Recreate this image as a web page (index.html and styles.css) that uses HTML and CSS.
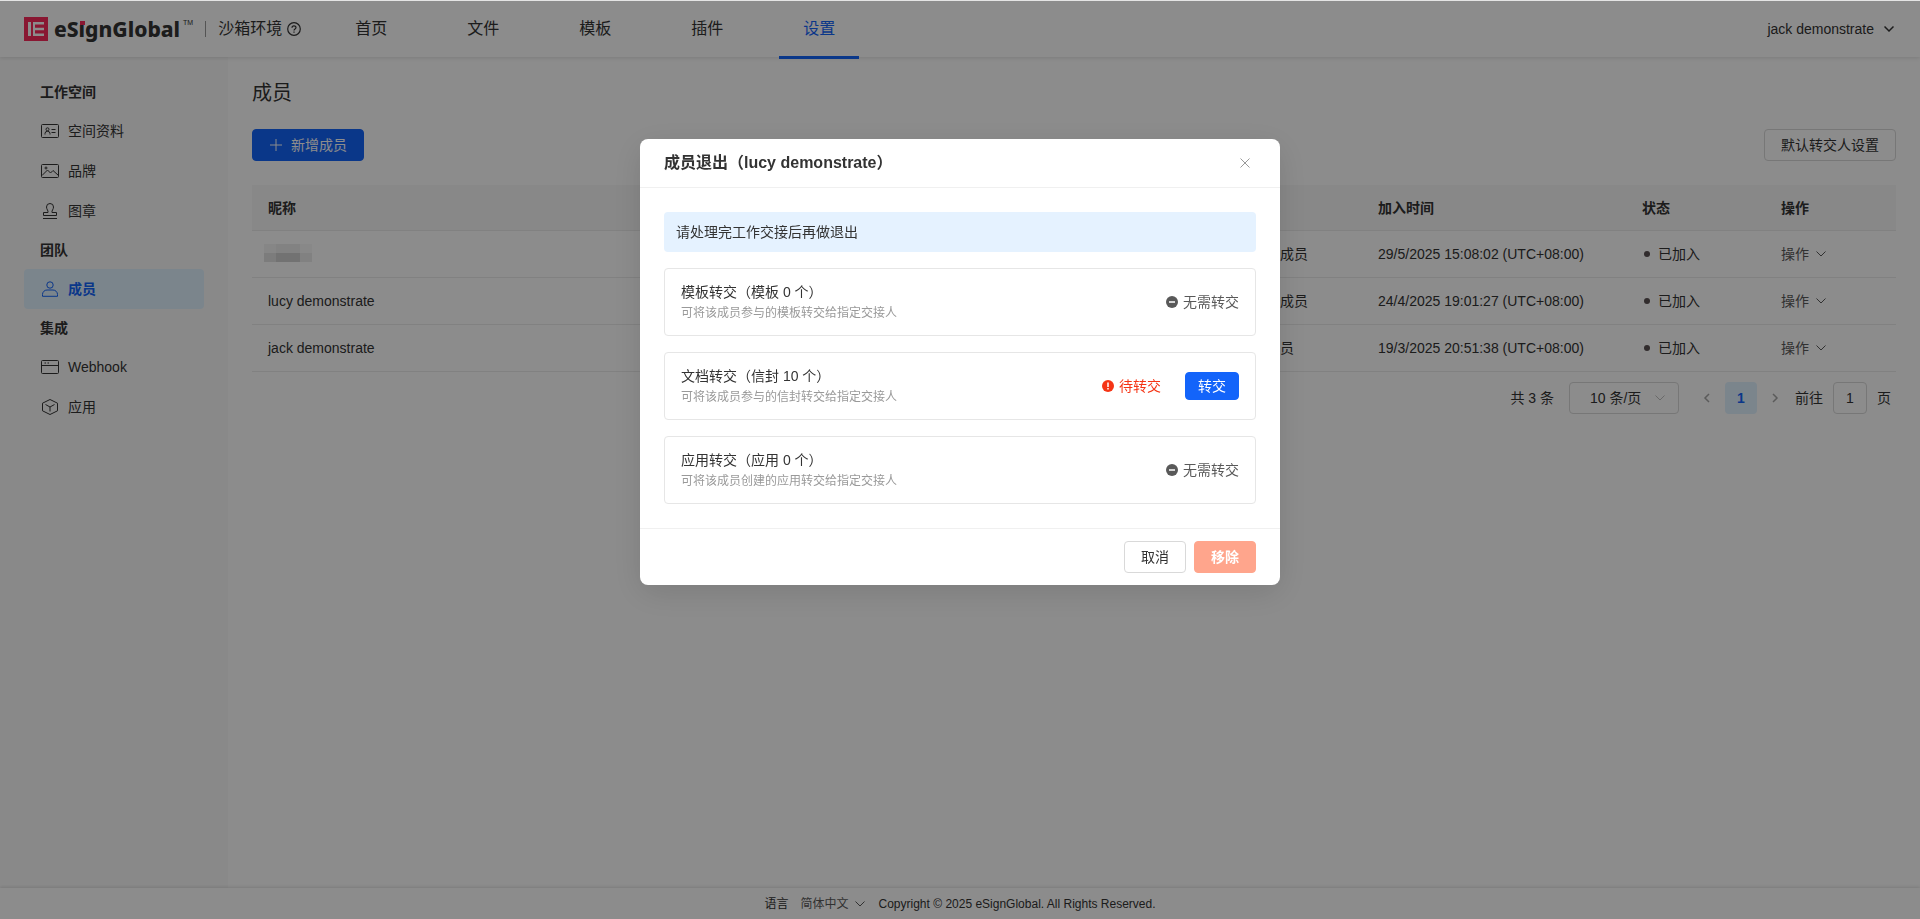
FILE: index.html
```html
<!DOCTYPE html>
<html lang="zh-CN">
<head>
  <meta charset="UTF-8">
  <meta name="viewport" content="width=device-width, initial-scale=1.0">
  <title>成员 - eSignGlobal</title>
  <link rel="stylesheet" href="styles.css">
</head>
<body>
  <header class="header">
    <a href="#" class="logo" aria-label="eSignGlobal">
      <svg class="logo-mark" viewBox="0 0 24 24">
        <rect width="24" height="24" fill="#fa2b5c"/>
        <path d="M4 5h3v14h-3zM9 5h11v2.500h-9v3.250h9v2.500h-9v3.250h9v2.500h-11z" fill="#fff"/>
      </svg>
      <span class="logo-text">eS<span class="logo-i">ı<i></i></span>gnGlobal</span>
      <span class="logo-tm">TM</span>
    </a>
    <span class="divider"></span>
    <span class="env">沙箱环境</span>
    <svg class="help" viewBox="0 0 14 14">
      <circle cx="7" cy="7" r="6.300"/>
      <path d="M5 5.700C5 3.200 9 3.200 9 5.600 9 7 7 6.900 7 8.500M7 9.500v1.200"/>
    </svg>
    <nav class="nav">
      <a href="#">首页</a>
      <a href="#">文件</a>
      <a href="#">模板</a>
      <a href="#">插件</a>
      <a href="#" class="active">设置</a>
    </nav>
    <button class="user">
      jack demonstrate
      <svg class="arrow" viewBox="0 0 10 10"><path d="M.500 2.500 5 7l4.500-4.500"/></svg>
    </button>
  </header>

  <div class="layout">
    <aside class="sidebar">
      <div class="menu-title">工作空间</div>
      <a href="#" class="menu-item">
        <svg viewBox="0 0 18 18">
          <rect x=".500" y="2.500" width="17" height="13" rx="1"/>
          <circle cx="6.500" cy="7.300" r="1.500"/>
          <path d="M4 12.500V11.500Q4 9.300 6.500 9.300T9 11.500V12.500M10.500 7.500h4M10.500 10.500h4"/>
        </svg>
        空间资料
      </a>
      <a href="#" class="menu-item">
        <svg viewBox="0 0 18 18">
          <rect x=".500" y="2.500" width="17" height="13" rx="1"/>
          <circle cx="5" cy="6" r="1"/>
          <path d="M1 13.500 6.500 8l3 3L12 8.500l5.500 5"/>
        </svg>
        品牌
      </a>
      <a href="#" class="menu-item">
        <svg viewBox="0 0 18 18">
          <path d="M7 10.500C7.500 8.500 5.500 7.500 5.500 5a3.500 3.500 0 0 1 7 0C12.500 7.500 10.500 8.500 11 10.500h4.500v3h-13v-3zM2 16.500h14"/>
        </svg>
        图章
      </a>
      <div class="menu-title">团队</div>
      <a href="#" class="menu-item active">
        <svg viewBox="0 0 18 18">
          <circle cx="9" cy="5" r="3.200"/>
          <path d="M1.500 16.300V14.500A4.500 4.500 0 0 1 6 10h6a4.500 4.500 0 0 1 4.500 4.500v1.800z"/>
        </svg>
        成员
      </a>
      <div class="menu-title">集成</div>
      <a href="#" class="menu-item">
        <svg viewBox="0 0 18 18">
          <rect x=".500" y="2.500" width="17" height="13" rx="1"/>
          <path d="M.500 7.500h17M3.500 5h1.500M6.500 5h1.500"/>
        </svg>
        Webhook
      </a>
      <a href="#" class="menu-item">
        <svg viewBox="0 0 18 18">
          <path d="M9 1.500l7.500 3.700v7.600l-7.500 3.700-7.500-3.700V5.200zM4.500 6.500 9 9l4.500-2.500M9 9v4.500"/>
        </svg>
        应用
      </a>
    </aside>

    <main class="content">
      <h1 class="page-title">成员</h1>
      <div class="toolbar">
        <button class="btn btn-primary">
          <svg class="plus" viewBox="0 0 12 12"><path d="M6 0v12M0 6h12"/></svg>
          新增成员
        </button>
        <button class="btn">默认转交人设置</button>
      </div>

      <table class="table">
        <colgroup>
          <col>
          <col class="col-role">
          <col class="col-time">
          <col class="col-status">
          <col class="col-action">
        </colgroup>
        <thead>
          <tr><th>昵称</th><th>角色</th><th>加入时间</th><th>状态</th><th>操作</th></tr>
        </thead>
        <tbody>
          <tr>
            <td>
              <svg class="mosaic" viewBox="0 0 48 18">
                <rect width="12" height="9" fill="#f5f5f5"/>
                <rect x="12" width="24" height="9" fill="#ededed"/>
                <rect x="36" width="12" height="9" fill="#f7f7f7"/>
                <rect y="9" width="12" height="9" fill="#e2e2e2"/>
                <rect x="12" y="9" width="24" height="9" fill="#cfcfcf"/>
                <rect x="36" y="9" width="12" height="9" fill="#ececec"/>
              </svg>
            </td>
            <td>普通成员</td>
            <td>29/5/2025 15:08:02 (UTC+08:00)</td>
            <td><span class="status">已加入</span></td>
            <td><button class="action">操作 <svg class="arrow" viewBox="0 0 10 10"><path d="M.500 2.500 5 7l4.500-4.500"/></svg></button></td>
          </tr>
          <tr>
            <td>lucy demonstrate</td>
            <td>普通成员</td>
            <td>24/4/2025 19:01:27 (UTC+08:00)</td>
            <td><span class="status">已加入</span></td>
            <td><button class="action">操作 <svg class="arrow" viewBox="0 0 10 10"><path d="M.500 2.500 5 7l4.500-4.500"/></svg></button></td>
          </tr>
          <tr>
            <td>jack demonstrate</td>
            <td>管理员</td>
            <td>19/3/2025 20:51:38 (UTC+08:00)</td>
            <td><span class="status">已加入</span></td>
            <td><button class="action">操作 <svg class="arrow" viewBox="0 0 10 10"><path d="M.500 2.500 5 7l4.500-4.500"/></svg></button></td>
          </tr>
        </tbody>
      </table>

      <div class="pagination">
        <span class="total">共 3 条</span>
        <div class="page-size">
          <select aria-label="每页条数">
            <option>10 条/页</option>
            <option>20 条/页</option>
            <option>50 条/页</option>
          </select>
          <svg class="arrow" viewBox="0 0 10 10"><path d="M.500 2.500 5 7l4.500-4.500"/></svg>
        </div>
        <div class="pages">
          <button class="pager" aria-label="上一页" disabled><svg viewBox="0 0 10 10"><path d="M7 1 3 5l4 4"/></svg></button>
          <button class="pager current">1</button>
          <button class="pager" aria-label="下一页" disabled><svg viewBox="0 0 10 10"><path d="M3 1l4 4-4 4"/></svg></button>
        </div>
        <label for="jump">前往</label>
        <input type="text" id="jump" class="jump" value="1">
        <span>页</span>
      </div>
    </main>
  </div>

  <footer class="footer">
    <span class="lang-label">语言</span>
    <button class="lang">简体中文 <svg class="arrow" viewBox="0 0 10 10"><path d="M.500 2.500 5 7l4.500-4.500"/></svg></button>
    <span>Copyright © 2025 eSignGlobal. All Rights Reserved.</span>
  </footer>

  <div class="mask">
    <div class="dialog" role="dialog" aria-labelledby="dialogTitle">
      <div class="dialog-header">
        <h2 id="dialogTitle">成员退出（lucy demonstrate）</h2>
        <button class="close" aria-label="关闭"><svg viewBox="0 0 10 10"><path d="M.500.500l9 9M9.500.500l-9 9"/></svg></button>
      </div>
      <div class="dialog-body">
        <div class="tip">请处理完工作交接后再做退出</div>
        <div class="card">
          <div class="card-info">
            <div class="card-title">模板转交（模板 0 个）</div>
            <div class="card-desc">可将该成员参与的模板转交给指定交接人</div>
          </div>
          <span class="state">
            <svg viewBox="0 0 12 12"><circle cx="6" cy="6" r="6"/><path d="M3 6h6"/></svg>
            无需转交
          </span>
        </div>
        <div class="card">
          <div class="card-info">
            <div class="card-title">文档转交（信封 10 个）</div>
            <div class="card-desc">可将该成员参与的信封转交给指定交接人</div>
          </div>
          <span class="state pending">
            <svg viewBox="0 0 12 12"><circle cx="6" cy="6" r="6"/><path d="M6 2.500v4.500M6 8v1.500"/></svg>
            待转交
          </span>
          <button class="btn btn-primary btn-small">转交</button>
        </div>
        <div class="card">
          <div class="card-info">
            <div class="card-title">应用转交（应用 0 个）</div>
            <div class="card-desc">可将该成员创建的应用转交给指定交接人</div>
          </div>
          <span class="state">
            <svg viewBox="0 0 12 12"><circle cx="6" cy="6" r="6"/><path d="M3 6h6"/></svg>
            无需转交
          </span>
        </div>
      </div>
      <div class="dialog-footer">
        <button class="btn">取消</button>
        <button class="btn btn-danger" disabled>移除</button>
      </div>
    </div>
  </div>
</body>
</html>
```
FILE: styles.css
```css
* {
  box-sizing: border-box;
}
body {
  margin: 0;
  min-height: 100vh;
  display: flex;
  flex-direction: column;
  border-top: 1px solid #e4e4e4;
  background-color: #fff;
  color: #333;
  font-family: "Liberation Sans", Arial, "Noto Sans CJK SC", sans-serif;
  font-size: 14px;
  line-height: 22px;
}
a {
  color: inherit;
  text-decoration: none;
}
button, input, select {
  font: inherit;
  color: inherit;
}
button {
  padding: 0;
  border: none;
  background: none;
  cursor: pointer;
}
svg {
  flex: none;
  fill: none;
  stroke: currentColor;
}
.arrow {
  width: 10px;
  height: 10px;
}

/* header */
.header {
  position: relative;
  display: flex;
  align-items: center;
  height: 56px;
  padding: 0 26px 0 24px;
  box-shadow: 0 1px 4px rgba(0, 0, 0, 0.12);
  font-size: 16px;
}
.logo {
  display: flex;
  align-items: center;
}
.logo-mark {
  width: 24px;
  height: 24px;
  margin-right: 6px;
  stroke: none;
}
.logo-text {
  font-family: "Noto Sans", sans-serif;
  font-size: 21px;
  font-weight: 800;
  line-height: 24px;
}
.logo-i {
  position: relative;
}
.logo-i i {
  position: absolute;
  top: 6px;
  left: 1px;
  width: 5px;
  height: 4px;
  background-color: #fa2b5c;
}
.logo-tm {
  align-self: flex-start;
  margin-left: 3px;
  font-size: 7px;
  line-height: 12px;
}
.divider {
  width: 1px;
  height: 16px;
  margin: 0 12px;
  background-color: #999;
}
.help {
  width: 14px;
  height: 14px;
  margin-left: 5px;
  stroke-width: 1.2;
}
.nav {
  display: flex;
  gap: 32px;
  margin-left: 30px;
}
.nav a {
  width: 80px;
  height: 60px;
  line-height: 60px;
  text-align: center;
}
.nav .active {
  color: #1364fa;
  border-bottom: 3px solid #1364fa;
}
.user {
  display: flex;
  align-items: center;
  gap: 10px;
  margin-left: auto;
  font-size: 14px;
}
.user .arrow {
  stroke-width: 1.5;
}

/* sidebar */
.layout {
  flex: 1;
  display: flex;
}
.sidebar {
  width: 228px;
  padding: 16px 24px;
  background-color: #fafafa;
}
.menu-title {
  padding: 0 16px;
  font-weight: bold;
  line-height: 38px;
}
.menu-item {
  display: flex;
  align-items: center;
  gap: 9px;
  width: 180px;
  height: 40px;
  padding: 0 17px;
  border-radius: 4px;
}
.menu-item svg {
  width: 18px;
  height: 18px;
}
.menu-item.active {
  background-color: #e1f2ff;
  color: #1364fa;
  font-weight: bold;
}

/* content */
.content {
  flex: 1;
  padding: 22px 24px;
}
.page-title {
  margin: 0 0 22px;
  font-size: 20px;
  font-weight: normal;
  line-height: 28px;
}
.toolbar {
  display: flex;
  justify-content: space-between;
  margin-bottom: 24px;
}
.btn {
  display: flex;
  align-items: center;
  justify-content: center;
  height: 32px;
  padding: 0 16px;
  border: 1px solid #d9d9d9;
  border-radius: 4px;
  background-color: #fff;
}
.btn-primary {
  border-color: #1364fa;
  background-color: #1364fa;
  color: #fff;
}
.btn-danger {
  border-color: #ffa58c;
  background-color: #ffa58c;
  color: #fff;
  font-weight: bold;
  cursor: not-allowed;
}
.btn-small {
  height: 28px;
  padding: 0 12px;
}
.plus {
  width: 12px;
  height: 12px;
  margin: 0 9px 0 1px;
}
.table {
  width: 100%;
  border-collapse: separate;
  border-spacing: 0;
  table-layout: fixed;
}
.table th, .table td {
  height: 47px;
  padding: 0 16px;
  border-bottom: 1px solid #ebebeb;
  text-align: left;
  white-space: nowrap;
}
.table th {
  height: 46px;
  background-color: #f7f7f7;
}
.col-role {
  width: 126px;
}
.col-time {
  width: 264px;
}
.col-status {
  width: 139px;
}
.col-action {
  width: 131px;
}
.mosaic {
  display: block;
  width: 48px;
  height: 18px;
  margin: 0 0 3px -4px;
  stroke: none;
}
.status {
  display: flex;
  align-items: center;
  gap: 8px;
}
.status::before {
  content: "";
  width: 6px;
  height: 6px;
  margin-left: 2px;
  border-radius: 50%;
  background-color: #5a5052;
}
.action {
  display: flex;
  align-items: center;
  gap: 7px;
  color: #595959;
}
.pagination {
  display: flex;
  align-items: center;
  justify-content: flex-end;
  gap: 10px;
  margin-top: 10px;
  padding-right: 5px;
}
.total {
  margin-right: 5px;
}
.page-size {
  position: relative;
  width: 110px;
}
.page-size select {
  width: 100%;
  height: 32px;
  padding: 0 20px;
  border: 1px solid #d9d9d9;
  border-radius: 4px;
  background-color: #fff;
  appearance: none;
}
.page-size .arrow {
  position: absolute;
  right: 14px;
  top: 11px;
  color: #bfbfbf;
}
.pages {
  display: flex;
}
.pager {
  display: flex;
  align-items: center;
  justify-content: center;
  width: 32px;
  height: 32px;
  border-radius: 4px;
}
.pager:disabled {
  width: 36px;
  color: #a6a6a6;
}
.pager svg {
  width: 10px;
  height: 10px;
  stroke-width: 1.5;
}
.pager.current {
  background-color: #e1f2ff;
  color: #1364fa;
  font-weight: bold;
}
.pages + label {
  margin-left: -8px;
}
.jump {
  width: 34px;
  height: 32px;
  padding: 0;
  border: 1px solid #d9d9d9;
  border-radius: 4px;
  text-align: center;
}

/* footer */
.footer {
  position: relative;
  display: flex;
  align-items: center;
  justify-content: center;
  height: 31px;
  background-color: #fff;
  box-shadow: 0 -1px 3px rgba(0, 0, 0, 0.12);
  font-size: 12px;
}
.lang {
  display: flex;
  align-items: center;
  gap: 6px;
  margin: 0 14px 0 12px;
  color: #595959;
}

/* dialog */
.mask {
  position: fixed;
  inset: 1px 0 0;
  padding: 138px 0 0;
  background-color: rgba(0, 0, 0, 0.45);
}
.dialog {
  width: 640px;
  margin: 0 auto;
  border-radius: 8px;
  background-color: #fff;
  box-shadow: 0 8px 32px rgba(0, 0, 0, 0.12);
}
.dialog-header {
  display: flex;
  align-items: center;
  justify-content: space-between;
  height: 49px;
  padding: 0 30px 0 24px;
  border-bottom: 1px solid #f0f0f0;
}
.dialog-header h2 {
  margin: 0;
  font-size: 16px;
  line-height: 24px;
}
.close {
  display: flex;
  color: #999;
}
.close svg {
  width: 10px;
  height: 10px;
}
.dialog-body {
  display: flex;
  flex-direction: column;
  gap: 16px;
  padding: 24px;
}
.tip {
  padding: 0 12px;
  border-radius: 4px;
  background-color: #e5f2ff;
  line-height: 40px;
}
.card {
  display: flex;
  align-items: center;
  gap: 24px;
  height: 68px;
  padding: 0 16px;
  border: 1px solid #e6e6e6;
  border-radius: 4px;
}
.card-info {
  flex: 1;
}
.card-desc {
  color: #999;
  font-size: 12px;
  line-height: 20px;
}
.state {
  display: flex;
  align-items: center;
  gap: 5px;
  color: #595959;
}
.state svg {
  width: 12px;
  height: 12px;
}
.state circle {
  fill: currentColor;
  stroke: none;
}
.state path {
  stroke: #fff;
  stroke-width: 1.5;
}
.pending {
  color: #f53516;
}
.dialog-footer {
  display: flex;
  justify-content: flex-end;
  gap: 8px;
  padding: 12px 24px;
  border-top: 1px solid #f0f0f0;
}
```
